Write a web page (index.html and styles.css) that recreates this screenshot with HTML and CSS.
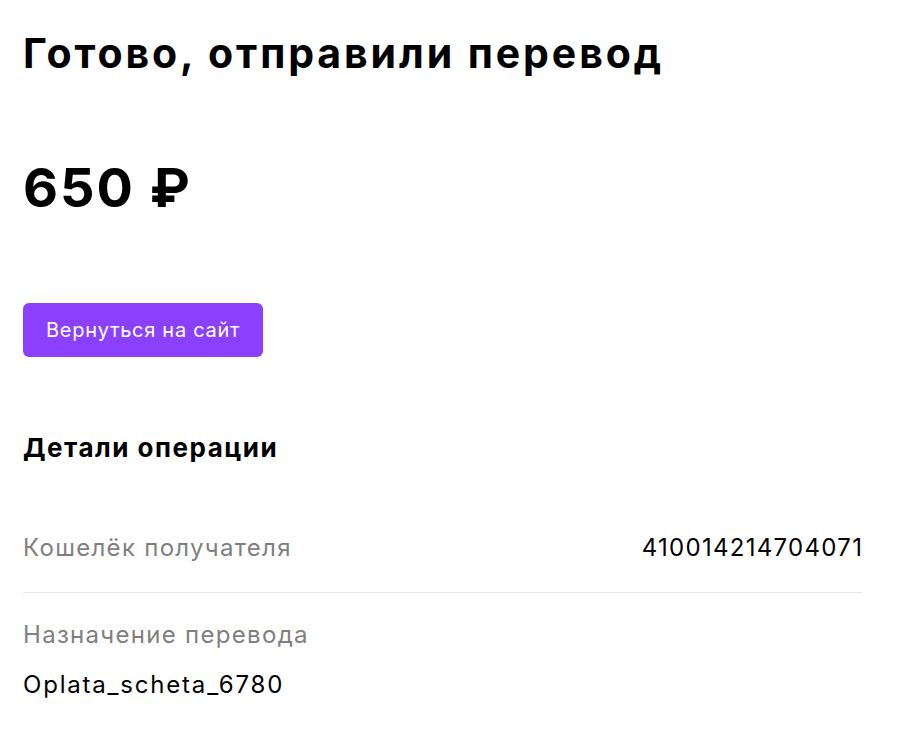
FILE: index.html
```html
<!DOCTYPE html>
<html lang="ru">
  <head>
    <meta charset="UTF-8" />
    <meta name="viewport" content="width=device-width, initial-scale=1.0" />
    <title>Перевод отправлен</title>
    <link rel="stylesheet" href="styles.css">
  </head>
  <body>
    <div id="success">
      <h1 class="title">Готово, отправили перевод</h1>
      <div class="amount">650 ₽</div>
      <button class="back-btn">Вернуться на сайт</button>

      <div id="details">
        <h2>Детали операции</h2>
        <div class="row">
          <span class="label">Кошелёк получателя</span>
          <span class="value">410014214704071</span>
        </div>
        <div class="row stacked">
          <span class="label">Назначение перевода</span>
          <span class="value">Oplata_scheta_6780</span>
        </div>
      </div>
    </div>
  </body>
</html>
```

FILE: styles.css
```css
body {
  margin: 0;
  background: #fff;
  color: #000;
  font-family: Inter, "Noto Sans", sans-serif;
}

#success {
  width: 839px;
  padding: 29px 0 0 23px;
  display: flex;
  flex-direction: column;
  align-items: flex-start;
}

.title {
  margin: 0;
  font-size: 41px;
  line-height: 48px;
  font-weight: 700;
  letter-spacing: 2.9px;
}

.amount {
  margin-top: 79px;
  font-size: 54px;
  line-height: 64px;
  font-weight: 700;
  letter-spacing: 2px;
}

.back-btn {
  margin-top: 83px;
  width: 240px;
  height: 54px;
  border: none;
  border-radius: 6px;
  background: #8b40fe;
  color: #fff;
  font-family: inherit;
  font-size: 20px;
  letter-spacing: 0.7px;
}

#details {
  width: 100%;
  margin-top: 75px;
}

#details h2 {
  margin: 0;
  font-size: 26px;
  line-height: 32px;
  font-weight: 700;
  letter-spacing: 1.5px;
}

.row {
  display: flex;
  justify-content: space-between;
  align-items: baseline;
  padding: 68px 0 28px;
  font-size: 24px;
  line-height: 32px;
  letter-spacing: 1.3px;
}

.row + .row {
  border-top: 1px solid #e6e6e6;
  padding-top: 26px;
}

.row.stacked {
  flex-direction: column;
  gap: 18px;
}

.label {
  color: #7f7f7f;
}

.value {
  margin-right: -1.3px;
}

.stacked .value {
  letter-spacing: 1.8px;
}
```
